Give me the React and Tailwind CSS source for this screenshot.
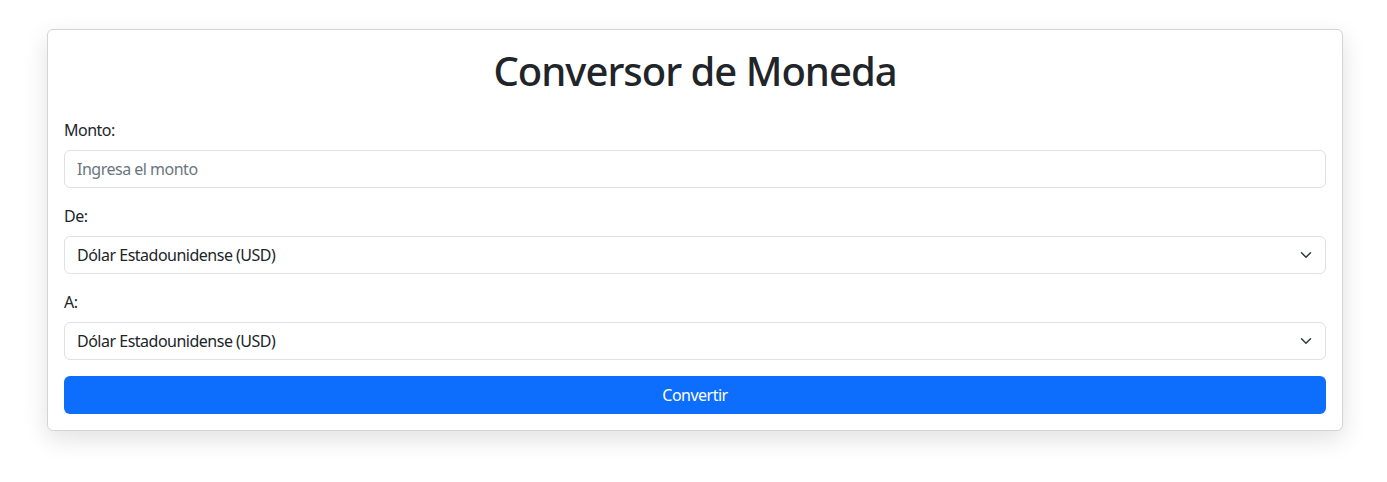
import React from "react";

const monedas = [
  "Dólar Estadounidense (USD)",
  "Euro (EUR)",
  "Peso Mexicano (MXN)",
  "Libra Esterlina (GBP)",
];

function Chevron() {
  return (
    <svg
      className="pointer-events-none absolute right-[12px] top-1/2 -translate-y-1/2"
      width="16"
      height="12"
      viewBox="0 0 16 16"
    >
      <path
        fill="none"
        stroke="#343a40"
        strokeLinecap="round"
        strokeLinejoin="round"
        strokeWidth="2"
        d="m2 5 6 6 6-6"
      />
    </svg>
  );
}

function Field({ label, children }) {
  return (
    <div className="mb-4">
      <label className="mb-2 block leading-6">{label}</label>
      {children}
    </div>
  );
}

function CurrencySelect() {
  return (
    <div className="relative">
      <select className="block h-[38px] w-full appearance-none rounded-[6px] border border-[#dee2e6] bg-white pl-3 pr-9 text-base tracking-[-0.5px] text-[#212529] outline-none">
        {monedas.map((m) => (
          <option key={m}>{m}</option>
        ))}
      </select>
      <Chevron />
    </div>
  );
}

export default function App() {
  return (
    <div
      className="min-h-screen bg-white pt-[29px] pl-[47px] pr-[44px] text-base tracking-[-0.5px] text-[#212529]"
      style={{ fontFamily: '"Noto Sans", "Open Sans", sans-serif' }}
    >
      <div className="rounded-[6px] border border-[#d4d4d4] bg-white p-4 shadow-[0_8px_24px_rgba(0,0,0,0.12)]">
        <h1 className="mb-6 pt-[2px] text-center text-[40px] font-medium leading-[46px] tracking-[-1px]">
          Conversor de Moneda
        </h1>

        <Field label="Monto:">
          <input
            type="number"
            placeholder="Ingresa el monto"
            className="block h-[38px] w-full rounded-[6px] border border-[#dee2e6] px-3 text-base tracking-[-0.5px] outline-none placeholder:text-[#6c757d]"
          />
        </Field>

        <Field label="De:">
          <CurrencySelect />
        </Field>

        <Field label="A:">
          <CurrencySelect />
        </Field>

        <button className="block h-[38px] w-full rounded-[6px] bg-[#0d6efd] text-base tracking-[-0.5px] text-white">
          Convertir
        </button>
      </div>
    </div>
  );
}
